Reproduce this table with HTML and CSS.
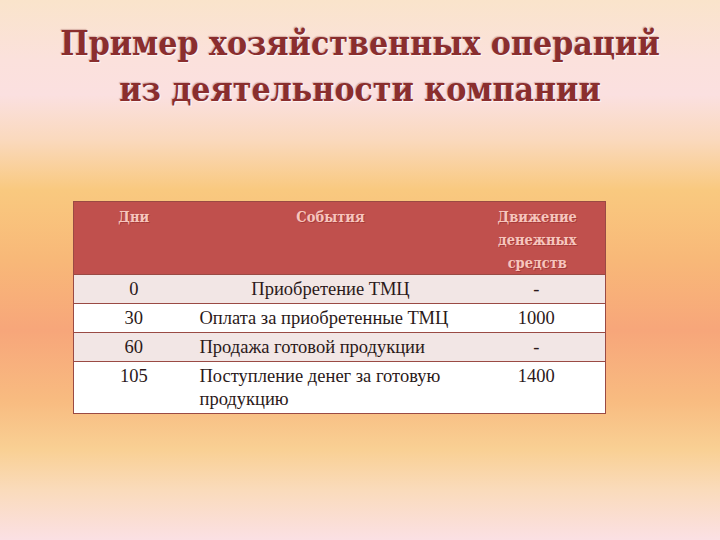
FILE: index.html
```html
<!DOCTYPE html>
<html lang="ru">
<head>
<meta charset="utf-8">
<link rel="stylesheet" href="styles.css">
</head>
<body>
<div class="slide">
  <h1 class="title">Пример хозяйственных операций<br>из деятельности компании</h1>
  <table class="ops">
    <colgroup>
      <col class="w1">
      <col class="w2">
      <col class="w3">
    </colgroup>
    <thead>
      <tr>
        <th class="c1">Дни</th>
        <th class="c2">События</th>
        <th class="c3">Движение денежных средств</th>
      </tr>
    </thead>
    <tbody>
      <tr class="shade">
        <td class="c1">0</td>
        <td class="c2 center">Приобретение ТМЦ</td>
        <td class="c3">-</td>
      </tr>
      <tr>
        <td class="c1">30</td>
        <td class="c2">Оплата за приобретенные ТМЦ</td>
        <td class="c3">1000</td>
      </tr>
      <tr class="shade">
        <td class="c1">60</td>
        <td class="c2">Продажа готовой продукции</td>
        <td class="c3">-</td>
      </tr>
      <tr class="tall">
        <td class="c1">105</td>
        <td class="c2">Поступление денег за готовую продукцию</td>
        <td class="c3">1400</td>
      </tr>
    </tbody>
  </table>
</div>
</body>
</html>
```

FILE: styles.css
```css
html, body {
  margin: 0;
  padding: 0;
}
body {
  width: 720px;
  height: 540px;
  overflow: hidden;
  font-family: "Liberation Serif", serif;
}
.slide {
  width: 720px;
  height: 540px;
  box-sizing: border-box;
  padding-top: 21px;
  background: linear-gradient(to bottom,
    #fae4cb 0px,
    #fbe1dc 60px,
    #fbe0e0 95px,
    #fad9bd 140px,
    #f9c97f 190px,
    #f8b878 260px,
    #f7a67a 330px,
    #f8bb80 400px,
    #f9d094 450px,
    #fadbbb 490px,
    #fbe0e4 540px);
  display: flex;
  flex-direction: column;
  align-items: center;
}
.title {
  margin: 0;
  font-family: "DejaVu Serif Condensed", "DejaVu Serif", serif;
  font-weight: bold;
  font-size: 33.5px;
  line-height: 46px;
  color: #8a2e2e;
  text-align: center;
  text-shadow: 1px 1px 1px rgba(255,255,255,0.7), -1px -1px 1px rgba(110,30,30,0.25);
}
.ops {
  align-self: flex-start;
  margin-left: 73px;
  margin-top: 88px;
  width: 532px;
  table-layout: fixed;
  border-collapse: collapse;
  font-family: "Liberation Serif", serif;
  font-size: 18.5px;
  color: #2b1919;
  border: 1px solid #9a4a44;
}
.w1 { width: 120px; }
.w2 { width: 274px; }
.w3 { width: 138px; }
.ops th {
  background: #c0504d;
  color: #f6c5bd;
  font-weight: bold;
  font-family: "DejaVu Serif Condensed", "DejaVu Serif", serif;
  font-size: 14.5px;
  line-height: 23px;
  vertical-align: top;
  text-align: center;
  padding: 3px 4px 0;
  height: 69px;
  text-shadow: 1px 1px 0 rgba(140,40,40,0.5);
}
.ops th.c3 {
  padding: 3px 28px 0 30px;
}
.ops td {
  background: #ffffff;
  border-top: 1px solid #9a4a44;
  line-height: 23px;
  padding: 3px 6px 2px;
  vertical-align: top;
  text-align: center;
}
.ops tr.shade td {
  background: #f2e6e5;
}
.ops tr.tall td {
  padding-bottom: 2px;
}
.ops td.c2 {
  text-align: left;
}
.ops td.c2.center {
  text-align: center;
}
```
